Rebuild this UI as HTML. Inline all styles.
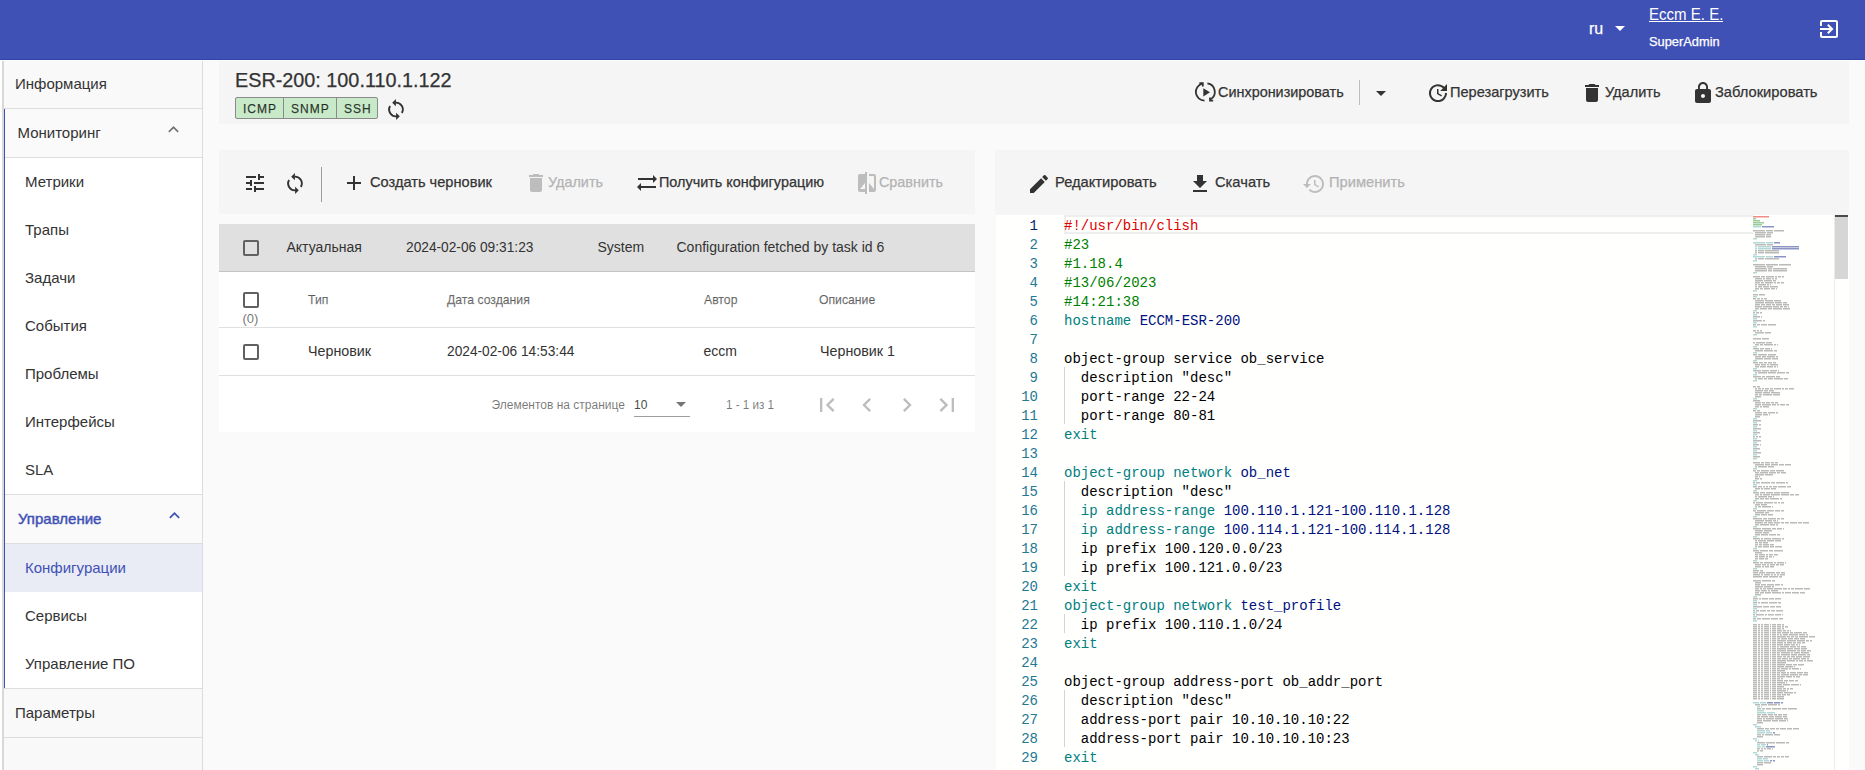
<!DOCTYPE html>
<html><head><meta charset="utf-8">
<style>
*{box-sizing:border-box}
html,body{margin:0;padding:0}
body{width:1865px;height:770px;overflow:hidden;background:#fafafa;position:relative;font-family:"Liberation Sans",sans-serif;color:#333}
.a{position:absolute}
.t{position:absolute;white-space:nowrap;line-height:1;transform-origin:0 0}
svg{position:absolute;display:block}
.md{-webkit-text-stroke:.25px currentColor}
</style></head><body>

<!-- header -->
<div class="a" style="left:0;top:0;width:1865px;height:59px;background:#3f51b5"></div>
<div class="a" style="left:0;top:59px;width:1865px;height:1px;background:#3343aa"></div>
<div class="a" style="left:0;top:60px;width:1865px;height:1px;background:#fdfdfd"></div>

<div class="t md" style="left:1589px;top:21.3px;font-size:16px;color:#fff">ru</div>
<svg style="left:1608px;top:16px" width="24" height="24" viewBox="0 0 24 24"><path fill="#fff" d="M7 10l5 5 5-5z"/></svg>
<div class="t" style="left:1649px;top:7px;font-size:16px;color:#fff;transform:scaleX(.94)">Eccm E. E.</div>
<div class="a" style="left:1649px;top:21px;width:74px;height:1px;background:#fff"></div>
<div class="t md" style="left:1649px;top:36px;font-size:12px;color:#fff;transform:scaleX(1.07)">SuperAdmin</div>
<svg style="left:1817px;top:17px" width="24" height="24" viewBox="0 0 24 24"><path fill="#fff" d="M10.09 15.59L11.5 17l5-5-5-5-1.41 1.41L12.67 11H3v2h9.67l-2.58 2.59zM19 3H5c-1.11 0-2 .9-2 2v4h2V5h14v14H5v-4H3v4c0 1.1.89 2 2 2h14c1.1 0 2-.9 2-2V5c0-1.1-.9-2-2-2z"/></svg>

<!-- sidebar -->
<div id="sidebar">
<div class="a" style="left:0;top:61px;width:2px;height:709px;background:#fff"></div>
<div class="a" style="left:2px;top:61px;width:2px;height:709px;background:#d9d9d9"></div>
<div class="a" style="left:4px;top:61px;width:198px;height:709px;background:#f9f9f9"></div>
<div class="a" style="left:202px;top:61px;width:1px;height:709px;background:#dcdcdc"></div>

<div class="a" style="left:4px;top:108px;width:198px;height:1px;background:#ddd"></div>
<div class="a" style="left:4px;top:109px;width:1px;height:579px;background:#3f51b5"></div>
<div class="a" style="left:5px;top:109px;width:197px;height:48px;background:#fafafa"></div>
<div class="a" style="left:5px;top:157px;width:197px;height:1px;background:#ddd"></div>
<div class="a" style="left:5px;top:158px;width:197px;height:336px;background:#fff"></div>
<div class="a" style="left:5px;top:494px;width:197px;height:1px;background:#ddd"></div>
<div class="a" style="left:5px;top:495px;width:197px;height:48px;background:#fafafa"></div>
<div class="a" style="left:5px;top:543px;width:197px;height:1px;background:#ddd"></div>
<div class="a" style="left:5px;top:544px;width:197px;height:48px;background:#e9ebf5"></div>
<div class="a" style="left:5px;top:592px;width:197px;height:96px;background:#fff"></div>
<div class="a" style="left:4px;top:688px;width:198px;height:1px;background:#ddd"></div>
<div class="a" style="left:4px;top:737px;width:198px;height:1px;background:#ddd"></div>
<div class="t" style="left:15px;top:76.2px;font-size:15px">Информация</div>
<div class="t" style="left:17.5px;top:125.1px;font-size:15px">Мониторинг</div>
<svg style="left:163.4px;top:119.4px" width="21" height="21" viewBox="0 0 24 24"><path fill="rgba(0,0,0,.54)" d="M12 8l-6 6 1.41 1.41L12 10.83l4.59 4.58L18 14z"/></svg>
<div class="t" style="left:25px;top:173.9px;font-size:15px">Метрики</div>
<div class="t" style="left:25px;top:221.9px;font-size:15px">Трапы</div>
<div class="t" style="left:25px;top:269.9px;font-size:15px">Задачи</div>
<div class="t" style="left:25px;top:317.9px;font-size:15px">События</div>
<div class="t" style="left:25px;top:365.9px;font-size:15px">Проблемы</div>
<div class="t" style="left:25px;top:413.9px;font-size:15px">Интерфейсы</div>
<div class="t" style="left:25px;top:461.9px;font-size:15px">SLA</div>
<div class="t" style="left:18px;top:510.9px;font-size:15px;color:#3f51b5;-webkit-text-stroke:.45px #3f51b5">Управление</div>
<svg style="left:163.5px;top:505.3px" width="21" height="21" viewBox="0 0 24 24"><path fill="#3f51b5" d="M12 8l-6 6 1.41 1.41L12 10.83l4.59 4.58L18 14z"/></svg>
<div class="t" style="left:25px;top:559.8px;font-size:15px;color:#3f51b5">Конфигурации</div>
<div class="t" style="left:25px;top:607.8px;font-size:15px">Сервисы</div>
<div class="t" style="left:25px;top:655.8px;font-size:15px">Управление ПО</div>
<div class="t" style="left:15px;top:704.9px;font-size:15px">Параметры</div>
</div>

<!-- main panels -->
<div class="a" style="left:219px;top:61px;width:1630px;height:63px;background:#f5f5f5"></div>
<div class="a" style="left:219px;top:150px;width:756px;height:64px;background:#f5f5f5"></div>
<div class="a" style="left:219px;top:224px;width:756px;height:47px;background:#e0e0e0"></div>
<div class="a" style="left:219px;top:271px;width:756px;height:1px;background:#c4c4c4"></div>
<div class="a" style="left:219px;top:272px;width:756px;height:160px;background:#fff"></div>
<div class="a" style="left:995px;top:150px;width:854px;height:65px;background:#f5f5f5"></div>
<div class="a" style="left:996px;top:215px;width:853px;height:555px;background:#fffffe"></div>

<!-- title panel -->
<div class="t md" style="left:235px;top:69.8px;font-size:20px;transform:scaleX(.99)">ESR-200: 100.110.1.122</div>
<div class="a" style="left:235px;top:97px;width:143px;height:22px;background:#c8eac8;border:1px solid #8a8a8a;border-radius:2px"></div>
<div class="a" style="left:283px;top:97px;width:1px;height:22px;background:#8a8a8a"></div>
<div class="a" style="left:336px;top:97px;width:1px;height:22px;background:#8a8a8a"></div>
<div class="t md" style="left:243px;top:103px;font-size:12px;letter-spacing:1px;color:rgba(0,0,0,.75)">ICMP</div>
<div class="t md" style="left:291px;top:103px;font-size:12px;letter-spacing:1px;color:rgba(0,0,0,.75)">SNMP</div>
<div class="t md" style="left:344px;top:103px;font-size:12px;letter-spacing:1px;color:rgba(0,0,0,.75)">SSH</div>
<svg style="left:382.5px;top:94.9px" width="26" height="30" viewBox="0 0 26 30"><g fill="none" stroke="#333" stroke-width="1.9"><path d="M12.4 7.7A6.8 6.8 0 0 1 18.9 17.9"/><path d="M7.1 11.1A6.8 6.8 0 0 0 13.6 21.3"/></g><path fill="#333" d="M9.2 7.7L12.9 4.1V11.3Z M16.8 21.3L13.1 17.7V24.9Z"/></svg>

<!-- header buttons -->
<svg style="left:1190px;top:76px" width="32" height="32" viewBox="0 0 32 32"><g fill="none" stroke="#333" stroke-width="1.8"><path d="M14.5 24.6A8.6 8.6 0 0 1 12.6 7.6"/><path d="M9.4 7.2H12.8V10.4"/><path d="M17.4 7.4A8.6 8.6 0 0 1 20.6 23.3"/><path d="M20 21.4V24.6H23.2"/></g><path fill="#333" d="M13.3 12.3L20 16.3L13.3 20.4Z"/></svg>
<div class="t md" style="left:1218px;top:84.3px;font-size:15px;transform:scaleX(.961)">Синхронизировать</div>
<div class="a" style="left:1359px;top:80px;width:1px;height:25px;background:#bdbdbd"></div>
<svg style="left:1368.6px;top:80.6px" width="24" height="24" viewBox="0 0 24 24"><path fill="#333" d="M7 10l5 5 5-5z"/></svg>
<svg style="left:1426.3px;top:80.9px" width="24" height="24" viewBox="0 0 24 24"><path fill="#333" d="M21 10.12h-6.78l2.74-2.82c-2.73-2.7-7.15-2.8-9.88-.1-2.73 2.71-2.73 7.08 0 9.79s7.15 2.71 9.88 0C18.32 15.65 19 14.08 19 12.1h2c0 1.98-.88 4.55-2.64 6.29-3.51 3.48-9.21 3.48-12.72 0-3.5-3.47-3.53-9.11-.02-12.58s9.14-3.47 12.65 0L21 3v7.12zM12.5 8v4.25l3.5 2.08-.72 1.21L11 13V8h1.5z"/></svg>
<div class="t md" style="left:1450px;top:84.3px;font-size:15px;transform:scaleX(.971)">Перезагрузить</div>
<svg style="left:1580px;top:81px" width="24" height="24" viewBox="0 0 24 24"><path fill="#333" d="M6 19c0 1.1.9 2 2 2h8c1.1 0 2-.9 2-2V7H6v12zM19 4h-3.5l-1-1h-5l-1 1H5v2h14V4z"/></svg>
<div class="t md" style="left:1604.5px;top:84.3px;font-size:15px;transform:scaleX(.969)">Удалить</div>
<svg style="left:1691px;top:81px" width="24" height="24" viewBox="0 0 24 24"><path fill="#333" d="M18 8h-1V6c0-2.76-2.24-5-5-5S7 3.24 7 6v2H6c-1.1 0-2 .9-2 2v10c0 1.1.9 2 2 2h12c1.1 0 2-.9 2-2V10c0-1.1-.9-2-2-2zm-6 9c-1.1 0-2-.9-2-2s.9-2 2-2 2 .9 2 2-.9 2-2 2zm3.1-9H8.9V6c0-1.71 1.39-3.1 3.1-3.1 1.71 0 3.1 1.39 3.1 3.1v2z"/></svg>
<div class="t md" style="left:1715px;top:84.3px;font-size:15px;transform:scaleX(.979)">Заблокировать</div>

<!-- left toolbar -->
<svg style="left:242.6px;top:171px" width="24" height="24" viewBox="0 0 24 24"><path fill="#333" d="M3 17v2h6v-2H3zM3 5v2h10V5H3zm10 16v-2h8v-2h-8v-2h-2v6h2zM7 9v2H3v2h4v2h2V9H7zm14 4v-2H11v2h10zm-6-4h2V7h4V5h-4V3h-2v6z"/></svg>
<svg style="left:282px;top:168.6px" width="26" height="30" viewBox="0 0 26 30"><g fill="none" stroke="#333" stroke-width="1.9"><path d="M12.4 7.7A6.8 6.8 0 0 1 18.9 17.9"/><path d="M7.1 11.1A6.8 6.8 0 0 0 13.6 21.3"/></g><path fill="#333" d="M9.2 7.7L12.9 4.1V11.3Z M16.8 21.3L13.1 17.7V24.9Z"/></svg>
<div class="a" style="left:320.5px;top:167px;width:1px;height:35px;background:#9e9e9e"></div>
<svg style="left:342px;top:171px" width="24" height="24" viewBox="0 0 24 24"><path fill="#333" d="M19 13h-6v6h-2v-6H5v-2h6V5h2v6h6v2z"/></svg>
<div class="t md" style="left:370px;top:173.8px;font-size:15px;transform:scaleX(.974)">Создать черновик</div>
<svg style="left:523.7px;top:171px" width="24" height="24" viewBox="0 0 24 24"><path fill="#bdbdbd" d="M6 19c0 1.1.9 2 2 2h8c1.1 0 2-.9 2-2V7H6v12zM19 4h-3.5l-1-1h-5l-1 1H5v2h14V4z"/></svg>
<div class="t md" style="left:548px;top:173.8px;font-size:15px;color:#b3b3b3;transform:scaleX(.96)">Удалить</div>
<svg style="left:635px;top:171px" width="24" height="24" viewBox="0 0 24 24"><path fill="#333" d="M22 8l-4-4v3H3v2h15v3l4-4zM2 16l4 4v-3h15v-2H6v-3l-4 4z"/></svg>
<div class="t md" style="left:658.5px;top:173.8px;font-size:15px;transform:scaleX(.96)">Получить конфигурацию</div>
<svg style="left:855px;top:171px" width="24" height="24" viewBox="0 0 24 24"><path fill="#bdbdbd" d="M10 3H5c-1.11 0-2 .9-2 2v14c0 1.1.89 2 2 2h5v2h2V1h-2v2zm0 15H5l5-6v6zm9-15h-5v2h5v13l-5-6v9h5c1.1 0 2-.9 2-2V5c0-1.1-.9-2-2-2z"/></svg>
<div class="t md" style="left:879px;top:173.8px;font-size:15px;color:#b3b3b3;transform:scaleX(.957)">Сравнить</div>

<!-- table -->
<div class="a" style="left:243px;top:240px;width:16px;height:16px;border:2px solid #616161;border-radius:2px"></div>
<div class="t" style="left:286.5px;top:240.1px;font-size:14px">Актуальная</div>
<div class="t" style="left:406px;top:240.1px;font-size:14px;transform:scaleX(.98)">2024-02-06 09:31:23</div>
<div class="t" style="left:597.5px;top:240.1px;font-size:14px">System</div>
<div class="t" style="left:676.5px;top:240.1px;font-size:14px">Configuration fetched by task id 6</div>
<div class="a" style="left:243px;top:292px;width:16px;height:16px;border:2px solid #616161;border-radius:2px"></div>
<div class="t" style="left:242.5px;top:312.3px;font-size:13px;color:rgba(0,0,0,.58)">(0)</div>
<div class="t md" style="left:307.5px;top:293.3px;font-size:13px;color:rgba(0,0,0,.54);transform:scaleX(.94)">Тип</div>
<div class="t md" style="left:446.5px;top:293.3px;font-size:13px;color:rgba(0,0,0,.54);transform:scaleX(.94)">Дата создания</div>
<div class="t md" style="left:703.5px;top:293.3px;font-size:13px;color:rgba(0,0,0,.54);transform:scaleX(.94)">Автор</div>
<div class="t md" style="left:819px;top:293.3px;font-size:13px;color:rgba(0,0,0,.54);transform:scaleX(.94)">Описание</div>
<div class="a" style="left:219px;top:327px;width:756px;height:1px;background:#e0e0e0"></div>
<div class="a" style="left:243px;top:344px;width:16px;height:16px;border:2px solid #616161;border-radius:2px"></div>
<div class="t" style="left:307.5px;top:344.1px;font-size:14px;transform:scaleX(1.02)">Черновик</div>
<div class="t" style="left:446.5px;top:344.1px;font-size:14px;transform:scaleX(0.98)">2024-02-06 14:53:44</div>
<div class="t" style="left:703.5px;top:344.1px;font-size:14px;transform:scaleX(1)">eccm</div>
<div class="t" style="left:819.5px;top:344.1px;font-size:14px;transform:scaleX(1.02)">Черновик 1</div>
<div class="a" style="left:219px;top:375px;width:756px;height:1px;background:#e0e0e0"></div>
<div class="t" style="left:491.5px;top:399.1px;font-size:12px;color:rgba(0,0,0,.54)">Элементов на странице</div>
<div class="t" style="left:634px;top:399.1px;font-size:12px;color:#4a4a4a">10</div>
<svg style="left:668.7px;top:391.8px" width="24" height="24" viewBox="0 0 24 24"><path fill="rgba(0,0,0,.54)" d="M7 10l5 5 5-5z"/></svg>
<div class="a" style="left:634px;top:416px;width:56px;height:1px;background:#9e9e9e"></div>
<div class="t" style="left:726px;top:399.1px;font-size:12px;color:rgba(0,0,0,.54);transform:scaleX(.97)">1 - 1 из 1</div>
<svg style="left:812.9px;top:390.9px" width="28" height="28" viewBox="0 0 24 24"><path fill="#bdbdbd" d="M18.41 16.59L13.82 12l4.59-4.59L17 6l-6 6 6 6zM6 6h2v12H6z"/></svg>
<svg style="left:853.2px;top:390.9px" width="28" height="28" viewBox="0 0 24 24"><path fill="#bdbdbd" d="M15.41 7.41L14 6l-6 6 6 6 1.41-1.41L10.83 12z"/></svg>
<svg style="left:893px;top:390.9px" width="28" height="28" viewBox="0 0 24 24"><path fill="#bdbdbd" d="M10 6L8.59 7.41 13.17 12l-4.58 4.59L10 18l6-6z"/></svg>
<svg style="left:933px;top:390.9px" width="28" height="28" viewBox="0 0 24 24"><path fill="#bdbdbd" d="M5.59 7.41L10.18 12l-4.59 4.59L7 18l6-6-6-6zM16 6h2v12h-2z"/></svg>

<!-- right toolbar -->
<svg style="left:1026.6px;top:171.7px" width="24" height="24" viewBox="0 0 24 24"><path fill="#333" d="M3 17.25V21h3.75L17.81 9.94l-3.75-3.75L3 17.25zM20.71 7.04c.39-.39.39-1.02 0-1.41l-2.34-2.34c-.39-.39-1.02-.39-1.41 0l-1.83 1.83 3.75 3.75 1.83-1.83z"/></svg>
<div class="t md" style="left:1054.5px;top:174.3px;font-size:15px;transform:scaleX(.98)">Редактировать</div>
<svg style="left:1187.6px;top:172px" width="24" height="24" viewBox="0 0 24 24"><path fill="#333" d="M19 9h-4V3H9v6H5l7 7 7-7zM5 18v2h14v-2H5z"/></svg>
<div class="t md" style="left:1215px;top:174.3px;font-size:15px;transform:scaleX(.98)">Скачать</div>
<svg style="left:1302px;top:171.5px" width="24" height="24" viewBox="0 0 24 24"><path fill="#bdbdbd" d="M13 3c-4.97 0-9 4.03-9 9H1l3.89 3.89.07.14L9 12H6c0-3.87 3.13-7 7-7s7 3.13 7 7-3.13 7-7 7c-1.93 0-3.68-.79-4.94-2.06l-1.42 1.42C8.27 19.99 10.51 21 13 21c4.97 0 9-4.03 9-9s-4.03-9-9-9zm-1 5v5l4.28 2.54.72-1.21-3.5-2.08V8H12z"/></svg>
<div class="t md" style="left:1328.5px;top:174.3px;font-size:15px;color:#b3b3b3;transform:scaleX(.98)">Применить</div>

<!-- editor -->
<div class="a" style="left:1064px;top:215px;width:689px;height:19px;border:2px solid #eee;border-right:0"></div>
<div class="a" style="left:1064px;top:367px;width:1px;height:57px;background:#d3d3d3"></div>
<div class="a" style="left:1064px;top:481px;width:1px;height:95px;background:#d3d3d3"></div>
<div class="a" style="left:1064px;top:614px;width:1px;height:19px;background:#d3d3d3"></div>
<div class="a" style="left:1064px;top:690px;width:1px;height:57px;background:#d3d3d3"></div>
<div class="a" style="left:996px;top:216.6px;width:42px;font:14px/19px 'Liberation Mono',monospace;text-align:right;color:#237893;white-space:pre"><span style="color:#0b216f">1</span>
2
3
4
5
6
7
8
9
10
11
12
13
14
15
16
17
18
19
20
21
22
23
24
25
26
27
28
29</div>
<div class="a" style="left:1064px;top:216.6px;font:14px/19px 'Liberation Mono',monospace;white-space:pre"><span style="color:#e00000">#!/usr/bin/clish</span>
<span style="color:#008000">#23</span>
<span style="color:#008000">#1.18.4</span>
<span style="color:#008000">#13/06/2023</span>
<span style="color:#008000">#14:21:38</span>
<span style="color:#008080">hostname </span><span style="color:#001080">ECCM-ESR-200</span>

<span style="color:#000">object-group service ob_service</span>
<span style="color:#000">  description "desc"</span>
<span style="color:#000">  port-range 22-24</span>
<span style="color:#000">  port-range 80-81</span>
<span style="color:#008080">exit</span>

<span style="color:#008080">object-group network </span><span style="color:#001080">ob_net</span>
<span style="color:#000">  description "desc"</span>
<span style="color:#008080">  ip address-range </span><span style="color:#001080">100.110.1.121-100.110.1.128</span>
<span style="color:#008080">  ip address-range </span><span style="color:#001080">100.114.1.121-100.114.1.128</span>
<span style="color:#000">  ip prefix 100.120.0.0/23</span>
<span style="color:#000">  ip prefix 100.121.0.0/23</span>
<span style="color:#008080">exit</span>
<span style="color:#008080">object-group network </span><span style="color:#001080">test_profile</span>
<span style="color:#000">  ip prefix 100.110.1.0/24</span>
<span style="color:#008080">exit</span>

<span style="color:#000">object-group address-port ob_addr_port</span>
<span style="color:#000">  description "desc"</span>
<span style="color:#000">  address-port pair 10.10.10.10:22</span>
<span style="color:#000">  address-port pair 10.10.10.10:23</span>
<span style="color:#008080">exit</span></div>
<div class="a" style="left:1834px;top:215px;width:1px;height:555px;background:#ececec"></div>
<div class="a" style="left:1835px;top:216.5px;width:13px;height:62px;background:#d6d6d6"></div>
<div class="a" style="left:1835px;top:215px;width:13px;height:2px;background:#4a4a4a"></div>

<!-- minimap -->
<svg style="left:1753px;top:216px" width="80" height="554" viewBox="0 0 80 554"><path fill="#e00000" fill-opacity="0.45" d="M0 0h16v1.5h-16z"/><path fill="#008000" fill-opacity="0.4" d="M0 2h3v1.5h-3zM0 4h7v1.5h-7zM0 6h11v1.5h-11zM0 8h9v1.5h-9z"/><path fill="#008080" fill-opacity="0.3" d="M0 10h8v1.5h-8zM0 22h4v1.5h-4zM0 26h12v1.5h-12zM13 26h7v1.5h-7zM2 30h2v1.5h-2zM5 30h13v1.5h-13zM2 32h2v1.5h-2zM5 32h13v1.5h-13zM0 38h4v1.5h-4zM0 40h12v1.5h-12zM13 40h7v1.5h-7zM0 44h4v1.5h-4zM0 56h4v1.5h-4zM0 74h4v1.5h-4zM0 80h4v1.5h-4zM0 94h4v1.5h-4zM0 98h4v1.5h-4zM0 102h4v1.5h-4zM0 106h4v1.5h-4zM0 110h4v1.5h-4zM0 118h4v1.5h-4zM0 130h4v1.5h-4zM0 136h4v1.5h-4zM0 144h4v1.5h-4zM0 152h4v1.5h-4zM0 158h4v1.5h-4zM0 164h4v1.5h-4zM0 182h4v1.5h-4zM0 192h4v1.5h-4zM0 202h4v1.5h-4zM0 206h4v1.5h-4zM0 210h4v1.5h-4zM0 214h4v1.5h-4zM0 218h4v1.5h-4zM0 222h4v1.5h-4zM0 226h4v1.5h-4zM0 230h4v1.5h-4zM0 234h4v1.5h-4zM0 238h4v1.5h-4zM0 242h4v1.5h-4zM0 252h4v1.5h-4zM0 264h4v1.5h-4zM0 268h4v1.5h-4zM0 274h4v1.5h-4zM0 284h4v1.5h-4zM0 292h4v1.5h-4zM0 300h4v1.5h-4zM0 310h4v1.5h-4zM0 320h4v1.5h-4zM0 332h4v1.5h-4zM0 344h4v1.5h-4zM0 352h4v1.5h-4zM0 380h4v1.5h-4zM0 384h4v1.5h-4zM0 388h4v1.5h-4zM0 392h4v1.5h-4zM0 396h4v1.5h-4zM0 400h4v1.5h-4zM0 404h4v1.5h-4zM0 486h6v1.5h-6zM7 486h6v1.5h-6zM4 490h3v1.5h-3zM8 490h1v1.5h-1zM4 494h7v1.5h-7zM4 496h9v1.5h-9zM14 496h8v1.5h-8zM0 508h4v1.5h-4zM2 510h6v1.5h-6zM4 514h8v1.5h-8zM13 514h4v1.5h-4zM4 516h8v1.5h-8zM13 516h6v1.5h-6zM0 522h4v1.5h-4zM2 524h2v1.5h-2zM5 524h1v1.5h-1zM4 528h3v1.5h-3zM8 528h5v1.5h-5zM4 530h4v1.5h-4zM9 530h3v1.5h-3zM0 536h4v1.5h-4zM2 538h4v1.5h-4zM4 542h5v1.5h-5zM10 542h5v1.5h-5zM4 544h6v1.5h-6zM11 544h5v1.5h-5zM0 550h4v1.5h-4zM2 552h4v1.5h-4z"/><path fill="#001080" fill-opacity="0.45" d="M9 10h12v1.5h-12zM21 26h6v1.5h-6zM19 30h27v1.5h-27zM19 32h27v1.5h-27zM21 40h12v1.5h-12zM14 486h6v1.5h-6zM21 486h6v1.5h-6zM28 486h2v1.5h-2zM20 516h2v1.5h-2zM14 528h1v1.5h-1zM13 530h9v1.5h-9zM17 544h2v1.5h-2zM20 544h2v1.5h-2z"/><path fill="#000" fill-opacity="0.27" d="M0 14h12v1.5h-12zM13 14h7v1.5h-7zM21 14h10v1.5h-10zM2 16h11v1.5h-11zM14 16h6v1.5h-6zM2 18h10v1.5h-10zM13 18h5v1.5h-5zM2 20h10v1.5h-10zM13 20h5v1.5h-5zM2 28h11v1.5h-11zM14 28h6v1.5h-6zM2 34h2v1.5h-2zM5 34h6v1.5h-6zM12 34h14v1.5h-14zM2 36h2v1.5h-2zM5 36h6v1.5h-6zM12 36h14v1.5h-14zM2 42h2v1.5h-2zM5 42h6v1.5h-6zM12 42h14v1.5h-14zM0 48h12v1.5h-12zM13 48h12v1.5h-12zM26 48h12v1.5h-12zM2 50h11v1.5h-11zM14 50h6v1.5h-6zM2 52h12v1.5h-12zM15 52h4v1.5h-4zM20 52h14v1.5h-14zM2 54h12v1.5h-12zM15 54h4v1.5h-4zM20 54h14v1.5h-14zM0 60h7v1.5h-7zM8 60h4v1.5h-4zM13 60h8v1.5h-8zM22 60h2v1.5h-2zM25 60h3v1.5h-3zM29 60h2v1.5h-2zM2 62h7v1.5h-7zM10 62h2v1.5h-2zM13 62h5v1.5h-5zM19 62h2v1.5h-2zM22 62h2v1.5h-2zM2 64h8v1.5h-8zM11 64h8v1.5h-8zM20 64h3v1.5h-3zM2 66h5v1.5h-5zM8 66h3v1.5h-3zM12 66h8v1.5h-8zM21 66h2v1.5h-2zM24 66h3v1.5h-3zM28 66h3v1.5h-3zM2 68h2v1.5h-2zM5 68h8v1.5h-8zM14 68h2v1.5h-2zM17 68h1v1.5h-1zM2 70h2v1.5h-2zM5 70h4v1.5h-4zM10 70h6v1.5h-6zM17 70h8v1.5h-8zM2 72h4v1.5h-4zM7 72h3v1.5h-3zM11 72h6v1.5h-6zM18 72h4v1.5h-4zM23 72h1v1.5h-1zM0 78h5v1.5h-5zM6 78h6v1.5h-6zM0 82h3v1.5h-3zM4 82h3v1.5h-3zM8 82h2v1.5h-2zM11 82h3v1.5h-3zM2 84h9v1.5h-9zM12 84h8v1.5h-8zM21 84h7v1.5h-7zM2 86h9v1.5h-9zM12 86h9v1.5h-9zM22 86h7v1.5h-7zM30 86h4v1.5h-4zM2 88h5v1.5h-5zM8 88h4v1.5h-4zM13 88h5v1.5h-5zM19 88h3v1.5h-3zM23 88h6v1.5h-6zM30 88h6v1.5h-6zM2 90h7v1.5h-7zM10 90h9v1.5h-9zM20 90h6v1.5h-6zM27 90h3v1.5h-3zM31 90h3v1.5h-3zM35 90h1v1.5h-1zM2 92h4v1.5h-4zM7 92h7v1.5h-7zM15 92h4v1.5h-4zM20 92h9v1.5h-9zM30 92h7v1.5h-7zM0 96h2v1.5h-2zM3 96h3v1.5h-3zM7 96h2v1.5h-2zM0 100h7v1.5h-7zM8 100h1v1.5h-1zM0 104h9v1.5h-9zM10 104h2v1.5h-2zM0 108h3v1.5h-3zM4 108h3v1.5h-3zM8 108h6v1.5h-6zM15 108h8v1.5h-8zM0 114h3v1.5h-3zM4 114h2v1.5h-2zM7 114h2v1.5h-2zM2 116h9v1.5h-9zM12 116h6v1.5h-6zM0 122h8v1.5h-8zM9 122h7v1.5h-7zM0 126h2v1.5h-2zM3 126h9v1.5h-9zM13 126h6v1.5h-6zM2 128h4v1.5h-4zM7 128h3v1.5h-3zM11 128h9v1.5h-9zM21 128h2v1.5h-2zM24 128h1v1.5h-1zM0 132h6v1.5h-6zM7 132h4v1.5h-4zM12 132h5v1.5h-5zM18 132h1v1.5h-1zM2 134h8v1.5h-8zM11 134h9v1.5h-9zM21 134h3v1.5h-3zM0 138h4v1.5h-4zM5 138h9v1.5h-9zM15 138h8v1.5h-8zM2 140h6v1.5h-6zM9 140h4v1.5h-4zM14 140h8v1.5h-8zM23 140h2v1.5h-2zM2 142h8v1.5h-8zM11 142h7v1.5h-7zM19 142h6v1.5h-6zM0 146h5v1.5h-5zM6 146h4v1.5h-4zM11 146h3v1.5h-3zM15 146h4v1.5h-4zM20 146h3v1.5h-3zM2 148h5v1.5h-5zM8 148h5v1.5h-5zM14 148h2v1.5h-2zM17 148h8v1.5h-8zM2 150h4v1.5h-4zM7 150h6v1.5h-6zM14 150h6v1.5h-6zM21 150h2v1.5h-2zM24 150h1v1.5h-1zM0 154h8v1.5h-8zM9 154h7v1.5h-7zM17 154h7v1.5h-7zM25 154h1v1.5h-1zM2 156h2v1.5h-2zM5 156h9v1.5h-9zM15 156h8v1.5h-8zM24 156h8v1.5h-8zM33 156h3v1.5h-3zM0 160h8v1.5h-8zM9 160h3v1.5h-3zM13 160h9v1.5h-9zM23 160h4v1.5h-4zM2 162h2v1.5h-2zM5 162h5v1.5h-5zM11 162h3v1.5h-3zM15 162h5v1.5h-5zM21 162h9v1.5h-9zM31 162h4v1.5h-4zM0 170h3v1.5h-3zM4 170h3v1.5h-3zM2 172h2v1.5h-2zM5 172h3v1.5h-3zM9 172h2v1.5h-2zM12 172h4v1.5h-4zM17 172h3v1.5h-3zM21 172h7v1.5h-7zM29 172h2v1.5h-2zM32 172h3v1.5h-3zM36 172h5v1.5h-5zM2 174h8v1.5h-8zM11 174h4v1.5h-4zM16 174h5v1.5h-5zM2 176h7v1.5h-7zM10 176h7v1.5h-7zM18 176h9v1.5h-9zM2 178h3v1.5h-3zM6 178h3v1.5h-3zM10 178h9v1.5h-9zM20 178h7v1.5h-7zM2 180h6v1.5h-6zM0 184h7v1.5h-7zM2 186h6v1.5h-6zM9 186h3v1.5h-3zM13 186h4v1.5h-4zM18 186h3v1.5h-3zM22 186h3v1.5h-3zM2 188h6v1.5h-6zM9 188h9v1.5h-9zM19 188h4v1.5h-4zM24 188h2v1.5h-2zM27 188h5v1.5h-5zM33 188h3v1.5h-3zM2 190h4v1.5h-4zM7 190h2v1.5h-2zM10 190h6v1.5h-6zM0 194h3v1.5h-3zM4 194h3v1.5h-3zM2 196h7v1.5h-7zM10 196h4v1.5h-4zM15 196h7v1.5h-7zM23 196h2v1.5h-2zM2 198h7v1.5h-7zM10 198h5v1.5h-5zM16 198h1v1.5h-1zM2 200h5v1.5h-5zM0 204h8v1.5h-8zM0 208h5v1.5h-5zM6 208h2v1.5h-2zM0 212h8v1.5h-8zM0 216h7v1.5h-7zM0 220h2v1.5h-2zM3 220h2v1.5h-2zM6 220h2v1.5h-2zM0 224h8v1.5h-8zM0 228h6v1.5h-6zM7 228h1v1.5h-1zM0 232h7v1.5h-7zM0 236h8v1.5h-8zM0 240h7v1.5h-7zM0 246h7v1.5h-7zM8 246h3v1.5h-3zM12 246h5v1.5h-5zM18 246h3v1.5h-3zM22 246h3v1.5h-3zM2 248h9v1.5h-9zM12 248h5v1.5h-5zM18 248h7v1.5h-7zM26 248h5v1.5h-5zM32 248h6v1.5h-6zM2 250h2v1.5h-2zM5 250h9v1.5h-9zM15 250h6v1.5h-6zM0 254h3v1.5h-3zM4 254h3v1.5h-3zM8 254h8v1.5h-8zM17 254h5v1.5h-5zM23 254h8v1.5h-8zM2 256h4v1.5h-4zM7 256h8v1.5h-8zM16 256h7v1.5h-7zM24 256h3v1.5h-3zM28 256h5v1.5h-5zM2 258h9v1.5h-9zM12 258h8v1.5h-8zM2 260h3v1.5h-3zM6 260h1v1.5h-1zM2 262h4v1.5h-4zM7 262h2v1.5h-2zM0 266h2v1.5h-2zM3 266h4v1.5h-4zM8 266h9v1.5h-9zM18 266h4v1.5h-4zM23 266h9v1.5h-9zM33 266h2v1.5h-2zM0 270h4v1.5h-4zM5 270h4v1.5h-4zM10 270h2v1.5h-2zM13 270h2v1.5h-2zM16 270h3v1.5h-3zM20 270h4v1.5h-4zM25 270h8v1.5h-8zM34 270h4v1.5h-4zM2 272h5v1.5h-5zM8 272h2v1.5h-2zM11 272h6v1.5h-6zM18 272h5v1.5h-5zM0 276h6v1.5h-6zM7 276h5v1.5h-5zM13 276h7v1.5h-7zM21 276h6v1.5h-6zM28 276h8v1.5h-8zM2 278h4v1.5h-4zM7 278h2v1.5h-2zM10 278h7v1.5h-7zM18 278h9v1.5h-9zM28 278h8v1.5h-8zM37 278h4v1.5h-4zM42 278h4v1.5h-4zM2 280h2v1.5h-2zM5 280h9v1.5h-9zM15 280h4v1.5h-4zM20 280h1v1.5h-1zM2 282h4v1.5h-4zM7 282h4v1.5h-4zM12 282h4v1.5h-4zM17 282h9v1.5h-9zM27 282h2v1.5h-2zM0 286h2v1.5h-2zM3 286h7v1.5h-7zM11 286h9v1.5h-9zM21 286h3v1.5h-3zM25 286h2v1.5h-2zM28 286h3v1.5h-3zM2 288h5v1.5h-5zM8 288h6v1.5h-6zM2 290h2v1.5h-2zM5 290h3v1.5h-3zM9 290h9v1.5h-9zM19 290h1v1.5h-1zM0 294h3v1.5h-3zM4 294h9v1.5h-9zM14 294h7v1.5h-7zM22 294h5v1.5h-5zM28 294h3v1.5h-3zM2 296h9v1.5h-9zM12 296h4v1.5h-4zM2 298h5v1.5h-5zM8 298h6v1.5h-6zM15 298h5v1.5h-5zM0 302h9v1.5h-9zM10 302h4v1.5h-4zM15 302h8v1.5h-8zM24 302h3v1.5h-3zM28 302h3v1.5h-3zM2 304h9v1.5h-9zM12 304h7v1.5h-7zM20 304h3v1.5h-3zM24 304h1v1.5h-1zM2 306h8v1.5h-8zM11 306h3v1.5h-3zM15 306h5v1.5h-5zM21 306h6v1.5h-6zM28 306h3v1.5h-3zM32 306h4v1.5h-4zM37 306h7v1.5h-7zM45 306h4v1.5h-4zM50 306h6v1.5h-6zM2 308h4v1.5h-4zM7 308h9v1.5h-9zM17 308h5v1.5h-5zM23 308h2v1.5h-2zM0 312h8v1.5h-8zM9 312h9v1.5h-9zM19 312h4v1.5h-4zM24 312h5v1.5h-5zM30 312h1v1.5h-1zM2 314h8v1.5h-8zM11 314h8v1.5h-8zM2 316h7v1.5h-7zM10 316h6v1.5h-6zM2 318h5v1.5h-5zM8 318h7v1.5h-7zM16 318h7v1.5h-7zM24 318h3v1.5h-3zM0 322h7v1.5h-7zM8 322h2v1.5h-2zM11 322h7v1.5h-7zM19 322h9v1.5h-9zM29 322h2v1.5h-2zM2 324h2v1.5h-2zM5 324h8v1.5h-8zM14 324h7v1.5h-7zM22 324h6v1.5h-6zM2 326h3v1.5h-3zM6 326h3v1.5h-3zM10 326h5v1.5h-5zM2 328h3v1.5h-3zM6 328h3v1.5h-3zM10 328h6v1.5h-6zM17 328h4v1.5h-4zM2 330h2v1.5h-2zM5 330h4v1.5h-4zM10 330h6v1.5h-6zM17 330h4v1.5h-4zM22 330h7v1.5h-7zM0 334h6v1.5h-6zM7 334h8v1.5h-8zM16 334h4v1.5h-4zM21 334h9v1.5h-9zM2 336h7v1.5h-7zM2 338h3v1.5h-3zM6 338h6v1.5h-6zM13 338h2v1.5h-2zM16 338h4v1.5h-4zM21 338h4v1.5h-4zM2 340h3v1.5h-3zM6 340h6v1.5h-6zM13 340h2v1.5h-2zM16 340h3v1.5h-3zM20 340h1v1.5h-1zM2 342h3v1.5h-3zM6 342h5v1.5h-5zM12 342h3v1.5h-3zM0 346h6v1.5h-6zM7 346h3v1.5h-3zM11 346h9v1.5h-9zM21 346h2v1.5h-2zM24 346h7v1.5h-7zM32 346h1v1.5h-1zM2 348h6v1.5h-6zM9 348h4v1.5h-4zM14 348h2v1.5h-2zM17 348h5v1.5h-5zM23 348h3v1.5h-3zM27 348h4v1.5h-4zM2 350h6v1.5h-6zM9 350h2v1.5h-2zM12 350h4v1.5h-4zM17 350h4v1.5h-4zM0 354h6v1.5h-6zM7 354h3v1.5h-3zM0 356h5v1.5h-5zM6 356h6v1.5h-6zM13 356h9v1.5h-9zM23 356h4v1.5h-4zM28 356h4v1.5h-4zM0 358h7v1.5h-7zM8 358h2v1.5h-2zM11 358h6v1.5h-6zM18 358h2v1.5h-2zM21 358h2v1.5h-2zM24 358h2v1.5h-2zM27 358h5v1.5h-5zM0 360h9v1.5h-9zM10 360h5v1.5h-5zM16 360h9v1.5h-9zM26 360h3v1.5h-3zM0 364h8v1.5h-8zM9 364h9v1.5h-9zM19 364h3v1.5h-3zM2 366h6v1.5h-6zM2 368h5v1.5h-5zM8 368h5v1.5h-5zM14 368h7v1.5h-7zM22 368h5v1.5h-5zM28 368h2v1.5h-2zM2 370h8v1.5h-8zM11 370h7v1.5h-7zM19 370h2v1.5h-2zM2 372h4v1.5h-4zM7 372h2v1.5h-2zM10 372h3v1.5h-3zM14 372h6v1.5h-6zM21 372h8v1.5h-8zM30 372h4v1.5h-4zM35 372h2v1.5h-2zM38 372h3v1.5h-3zM42 372h8v1.5h-8zM51 372h6v1.5h-6zM2 374h5v1.5h-5zM8 374h6v1.5h-6zM15 374h2v1.5h-2zM18 374h7v1.5h-7zM2 376h4v1.5h-4zM7 376h4v1.5h-4zM12 376h6v1.5h-6zM19 376h9v1.5h-9zM29 376h2v1.5h-2zM32 376h6v1.5h-6zM39 376h7v1.5h-7zM47 376h5v1.5h-5zM2 378h6v1.5h-6zM0 382h5v1.5h-5zM6 382h2v1.5h-2zM9 382h6v1.5h-6zM16 382h5v1.5h-5zM22 382h6v1.5h-6zM0 386h4v1.5h-4zM5 386h2v1.5h-2zM8 386h7v1.5h-7zM16 386h8v1.5h-8zM25 386h3v1.5h-3zM0 390h9v1.5h-9zM10 390h6v1.5h-6zM17 390h5v1.5h-5zM23 390h5v1.5h-5zM0 394h2v1.5h-2zM3 394h3v1.5h-3zM7 394h6v1.5h-6zM14 394h3v1.5h-3zM18 394h4v1.5h-4zM23 394h7v1.5h-7zM0 398h2v1.5h-2zM3 398h8v1.5h-8zM12 398h2v1.5h-2zM15 398h6v1.5h-6zM22 398h6v1.5h-6zM29 398h1v1.5h-1zM0 402h3v1.5h-3zM4 402h4v1.5h-4zM9 402h8v1.5h-8zM18 402h7v1.5h-7zM26 402h4v1.5h-4zM0 408h4v1.5h-4zM5 408h2v1.5h-2zM8 408h2v1.5h-2zM11 408h5v1.5h-5zM17 408h1v1.5h-1zM19 408h4v1.5h-4zM24 408h4v1.5h-4zM29 408h2v1.5h-2zM0 410h4v1.5h-4zM5 410h2v1.5h-2zM8 410h2v1.5h-2zM11 410h5v1.5h-5zM17 410h1v1.5h-1zM19 410h4v1.5h-4zM24 410h4v1.5h-4zM29 410h2v1.5h-2zM32 410h3v1.5h-3zM0 412h4v1.5h-4zM5 412h2v1.5h-2zM8 412h2v1.5h-2zM11 412h5v1.5h-5zM17 412h1v1.5h-1zM19 412h4v1.5h-4zM24 412h4v1.5h-4zM29 412h2v1.5h-2zM0 414h4v1.5h-4zM5 414h2v1.5h-2zM8 414h2v1.5h-2zM11 414h5v1.5h-5zM17 414h1v1.5h-1zM19 414h4v1.5h-4zM24 414h5v1.5h-5zM30 414h3v1.5h-3zM34 414h2v1.5h-2zM37 414h1v1.5h-1zM0 416h4v1.5h-4zM5 416h2v1.5h-2zM8 416h2v1.5h-2zM11 416h5v1.5h-5zM17 416h1v1.5h-1zM19 416h4v1.5h-4zM24 416h4v1.5h-4zM29 416h7v1.5h-7zM37 416h3v1.5h-3zM41 416h8v1.5h-8zM50 416h4v1.5h-4zM0 418h4v1.5h-4zM5 418h2v1.5h-2zM8 418h2v1.5h-2zM11 418h5v1.5h-5zM17 418h1v1.5h-1zM19 418h4v1.5h-4zM24 418h2v1.5h-2zM27 418h2v1.5h-2zM30 418h5v1.5h-5zM36 418h9v1.5h-9zM46 418h6v1.5h-6zM53 418h2v1.5h-2zM0 420h4v1.5h-4zM5 420h2v1.5h-2zM8 420h2v1.5h-2zM11 420h5v1.5h-5zM17 420h1v1.5h-1zM19 420h4v1.5h-4zM24 420h9v1.5h-9zM34 420h3v1.5h-3zM38 420h3v1.5h-3zM42 420h3v1.5h-3zM46 420h9v1.5h-9zM56 420h6v1.5h-6zM0 422h4v1.5h-4zM5 422h2v1.5h-2zM8 422h2v1.5h-2zM11 422h5v1.5h-5zM17 422h1v1.5h-1zM19 422h4v1.5h-4zM24 422h3v1.5h-3zM28 422h6v1.5h-6zM35 422h5v1.5h-5zM41 422h5v1.5h-5zM47 422h5v1.5h-5zM0 424h4v1.5h-4zM5 424h2v1.5h-2zM8 424h2v1.5h-2zM11 424h5v1.5h-5zM17 424h1v1.5h-1zM19 424h4v1.5h-4zM24 424h9v1.5h-9zM34 424h9v1.5h-9zM44 424h8v1.5h-8zM53 424h3v1.5h-3zM57 424h2v1.5h-2zM0 426h4v1.5h-4zM5 426h2v1.5h-2zM8 426h2v1.5h-2zM11 426h5v1.5h-5zM17 426h1v1.5h-1zM19 426h4v1.5h-4zM24 426h6v1.5h-6zM31 426h2v1.5h-2zM34 426h5v1.5h-5zM40 426h3v1.5h-3zM44 426h4v1.5h-4zM49 426h3v1.5h-3zM0 428h4v1.5h-4zM5 428h2v1.5h-2zM8 428h2v1.5h-2zM11 428h5v1.5h-5zM17 428h1v1.5h-1zM19 428h4v1.5h-4zM24 428h6v1.5h-6zM31 428h6v1.5h-6zM38 428h4v1.5h-4zM43 428h2v1.5h-2zM46 428h1v1.5h-1zM0 430h4v1.5h-4zM5 430h2v1.5h-2zM8 430h2v1.5h-2zM11 430h5v1.5h-5zM17 430h1v1.5h-1zM19 430h4v1.5h-4zM24 430h2v1.5h-2zM27 430h9v1.5h-9zM37 430h6v1.5h-6zM44 430h3v1.5h-3zM48 430h5v1.5h-5zM0 432h4v1.5h-4zM5 432h2v1.5h-2zM8 432h2v1.5h-2zM11 432h5v1.5h-5zM17 432h1v1.5h-1zM19 432h4v1.5h-4zM24 432h9v1.5h-9zM34 432h6v1.5h-6zM41 432h6v1.5h-6zM48 432h6v1.5h-6zM0 434h4v1.5h-4zM5 434h2v1.5h-2zM8 434h2v1.5h-2zM11 434h5v1.5h-5zM17 434h1v1.5h-1zM19 434h4v1.5h-4zM24 434h9v1.5h-9zM34 434h9v1.5h-9zM44 434h3v1.5h-3zM48 434h5v1.5h-5zM54 434h4v1.5h-4zM0 436h4v1.5h-4zM5 436h2v1.5h-2zM8 436h2v1.5h-2zM11 436h5v1.5h-5zM17 436h1v1.5h-1zM19 436h4v1.5h-4zM24 436h3v1.5h-3zM28 436h9v1.5h-9zM38 436h2v1.5h-2zM41 436h6v1.5h-6zM48 436h8v1.5h-8zM0 438h4v1.5h-4zM5 438h2v1.5h-2zM8 438h2v1.5h-2zM11 438h5v1.5h-5zM17 438h1v1.5h-1zM19 438h4v1.5h-4zM24 438h3v1.5h-3zM28 438h9v1.5h-9zM38 438h6v1.5h-6zM45 438h8v1.5h-8zM54 438h3v1.5h-3zM0 440h4v1.5h-4zM5 440h2v1.5h-2zM8 440h2v1.5h-2zM11 440h5v1.5h-5zM17 440h1v1.5h-1zM19 440h4v1.5h-4zM24 440h5v1.5h-5zM30 440h3v1.5h-3zM34 440h3v1.5h-3zM38 440h4v1.5h-4zM43 440h6v1.5h-6zM50 440h7v1.5h-7zM0 442h4v1.5h-4zM5 442h2v1.5h-2zM8 442h2v1.5h-2zM11 442h5v1.5h-5zM17 442h1v1.5h-1zM19 442h4v1.5h-4zM24 442h4v1.5h-4zM29 442h6v1.5h-6zM36 442h3v1.5h-3zM40 442h7v1.5h-7zM48 442h5v1.5h-5zM54 442h2v1.5h-2zM0 444h4v1.5h-4zM5 444h2v1.5h-2zM8 444h2v1.5h-2zM11 444h5v1.5h-5zM17 444h1v1.5h-1zM19 444h4v1.5h-4zM24 444h9v1.5h-9zM34 444h8v1.5h-8zM43 444h2v1.5h-2zM46 444h4v1.5h-4zM51 444h2v1.5h-2zM54 444h6v1.5h-6zM0 446h4v1.5h-4zM5 446h2v1.5h-2zM8 446h2v1.5h-2zM11 446h5v1.5h-5zM17 446h1v1.5h-1zM19 446h4v1.5h-4zM24 446h9v1.5h-9zM0 448h4v1.5h-4zM5 448h2v1.5h-2zM8 448h2v1.5h-2zM11 448h5v1.5h-5zM17 448h1v1.5h-1zM19 448h4v1.5h-4zM24 448h8v1.5h-8zM33 448h6v1.5h-6zM40 448h4v1.5h-4zM45 448h6v1.5h-6zM0 450h4v1.5h-4zM5 450h2v1.5h-2zM8 450h2v1.5h-2zM11 450h5v1.5h-5zM17 450h1v1.5h-1zM19 450h4v1.5h-4zM24 450h7v1.5h-7zM32 450h8v1.5h-8zM41 450h1v1.5h-1zM0 452h4v1.5h-4zM5 452h2v1.5h-2zM8 452h2v1.5h-2zM11 452h5v1.5h-5zM17 452h1v1.5h-1zM19 452h4v1.5h-4zM24 452h3v1.5h-3zM28 452h7v1.5h-7zM36 452h2v1.5h-2zM39 452h7v1.5h-7zM47 452h1v1.5h-1zM0 454h4v1.5h-4zM5 454h2v1.5h-2zM8 454h2v1.5h-2zM11 454h5v1.5h-5zM17 454h1v1.5h-1zM19 454h4v1.5h-4zM24 454h8v1.5h-8zM0 456h4v1.5h-4zM5 456h2v1.5h-2zM8 456h2v1.5h-2zM11 456h5v1.5h-5zM17 456h1v1.5h-1zM19 456h4v1.5h-4zM24 456h3v1.5h-3zM28 456h5v1.5h-5zM34 456h2v1.5h-2zM37 456h6v1.5h-6zM44 456h6v1.5h-6zM51 456h4v1.5h-4zM0 458h4v1.5h-4zM5 458h2v1.5h-2zM8 458h2v1.5h-2zM11 458h5v1.5h-5zM17 458h1v1.5h-1zM19 458h4v1.5h-4zM24 458h3v1.5h-3zM28 458h8v1.5h-8zM37 458h8v1.5h-8zM46 458h3v1.5h-3zM50 458h5v1.5h-5zM0 460h4v1.5h-4zM5 460h2v1.5h-2zM8 460h2v1.5h-2zM11 460h5v1.5h-5zM17 460h1v1.5h-1zM19 460h4v1.5h-4zM24 460h8v1.5h-8zM33 460h6v1.5h-6zM40 460h2v1.5h-2zM43 460h4v1.5h-4zM0 462h4v1.5h-4zM5 462h2v1.5h-2zM8 462h2v1.5h-2zM11 462h5v1.5h-5zM17 462h1v1.5h-1zM19 462h4v1.5h-4zM24 462h3v1.5h-3zM28 462h2v1.5h-2zM0 464h4v1.5h-4zM5 464h2v1.5h-2zM8 464h2v1.5h-2zM11 464h5v1.5h-5zM17 464h1v1.5h-1zM19 464h4v1.5h-4zM24 464h6v1.5h-6zM31 464h4v1.5h-4zM36 464h5v1.5h-5zM42 464h3v1.5h-3zM0 466h4v1.5h-4zM5 466h2v1.5h-2zM8 466h2v1.5h-2zM11 466h5v1.5h-5zM17 466h1v1.5h-1zM19 466h4v1.5h-4zM24 466h8v1.5h-8zM33 466h1v1.5h-1zM0 468h4v1.5h-4zM5 468h2v1.5h-2zM8 468h2v1.5h-2zM11 468h5v1.5h-5zM17 468h1v1.5h-1zM19 468h4v1.5h-4zM24 468h5v1.5h-5zM30 468h7v1.5h-7zM38 468h8v1.5h-8zM47 468h1v1.5h-1zM0 470h4v1.5h-4zM5 470h2v1.5h-2zM8 470h2v1.5h-2zM11 470h5v1.5h-5zM17 470h1v1.5h-1zM19 470h4v1.5h-4zM24 470h7v1.5h-7zM0 472h4v1.5h-4zM5 472h2v1.5h-2zM8 472h2v1.5h-2zM11 472h5v1.5h-5zM17 472h1v1.5h-1zM19 472h4v1.5h-4zM24 472h5v1.5h-5zM30 472h3v1.5h-3zM34 472h2v1.5h-2zM37 472h3v1.5h-3zM0 474h4v1.5h-4zM5 474h2v1.5h-2zM8 474h2v1.5h-2zM11 474h5v1.5h-5zM17 474h1v1.5h-1zM19 474h4v1.5h-4zM24 474h9v1.5h-9zM34 474h1v1.5h-1zM0 476h4v1.5h-4zM5 476h2v1.5h-2zM8 476h2v1.5h-2zM11 476h5v1.5h-5zM17 476h1v1.5h-1zM19 476h4v1.5h-4zM24 476h6v1.5h-6zM31 476h9v1.5h-9zM41 476h2v1.5h-2zM0 478h4v1.5h-4zM5 478h2v1.5h-2zM8 478h2v1.5h-2zM11 478h5v1.5h-5zM17 478h1v1.5h-1zM19 478h4v1.5h-4zM24 478h4v1.5h-4zM29 478h4v1.5h-4zM34 478h3v1.5h-3zM0 480h4v1.5h-4zM5 480h2v1.5h-2zM8 480h2v1.5h-2zM11 480h5v1.5h-5zM17 480h1v1.5h-1zM19 480h4v1.5h-4zM24 480h7v1.5h-7zM0 482h4v1.5h-4zM5 482h2v1.5h-2zM8 482h2v1.5h-2zM11 482h5v1.5h-5zM17 482h1v1.5h-1zM19 482h4v1.5h-4zM24 482h7v1.5h-7zM2 488h5v1.5h-5zM8 488h6v1.5h-6zM15 488h9v1.5h-9zM25 488h2v1.5h-2zM4 492h4v1.5h-4zM9 492h3v1.5h-3zM13 492h5v1.5h-5zM19 492h9v1.5h-9zM29 492h5v1.5h-5zM35 492h9v1.5h-9zM4 498h4v1.5h-4zM9 498h5v1.5h-5zM15 498h5v1.5h-5zM21 498h3v1.5h-3zM25 498h4v1.5h-4zM30 498h4v1.5h-4zM4 500h3v1.5h-3zM8 500h7v1.5h-7zM16 500h5v1.5h-5zM22 500h7v1.5h-7zM30 500h4v1.5h-4zM4 502h5v1.5h-5zM10 502h2v1.5h-2zM13 502h8v1.5h-8zM22 502h8v1.5h-8zM31 502h4v1.5h-4zM4 504h5v1.5h-5zM10 504h8v1.5h-8zM19 504h6v1.5h-6zM26 504h7v1.5h-7zM34 504h1v1.5h-1zM4 506h6v1.5h-6zM4 512h7v1.5h-7zM12 512h4v1.5h-4zM17 512h5v1.5h-5zM23 512h3v1.5h-3zM27 512h6v1.5h-6zM34 512h5v1.5h-5zM40 512h6v1.5h-6zM4 518h4v1.5h-4zM9 518h2v1.5h-2zM12 518h8v1.5h-8zM21 518h6v1.5h-6zM4 520h6v1.5h-6zM4 526h8v1.5h-8zM13 526h9v1.5h-9zM23 526h9v1.5h-9zM33 526h3v1.5h-3zM4 532h3v1.5h-3zM8 532h2v1.5h-2zM11 532h2v1.5h-2zM14 532h4v1.5h-4zM19 532h1v1.5h-1zM4 534h2v1.5h-2zM7 534h3v1.5h-3zM4 540h6v1.5h-6zM11 540h8v1.5h-8zM20 540h3v1.5h-3zM24 540h3v1.5h-3zM28 540h3v1.5h-3zM32 540h4v1.5h-4zM4 546h6v1.5h-6zM11 546h7v1.5h-7zM4 548h6v1.5h-6z"/></svg>

</body></html>
